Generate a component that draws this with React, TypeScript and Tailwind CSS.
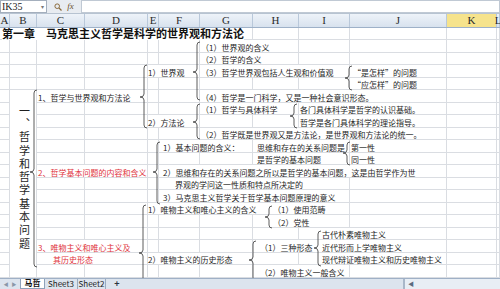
import React from 'react';

const letters = ['A', 'B', 'C', 'D', 'E', 'F', 'G', 'H', 'I', 'J', 'K', 'L'];

type Item = { pos: string; text: string; red?: boolean };

const items: Item[] = [
  { pos: 'col-start-7 row-start-2 pl-[1px]', text: '（1）世界观的含义' },
  { pos: 'col-start-7 row-start-3 pl-[1px]', text: '（2）哲学的含义' },
  { pos: 'col-start-5 row-start-4', text: '1）世界观' },
  { pos: 'col-start-7 row-start-4 pl-[1px]', text: '（3）哲学世界观包括人生观和价值观' },
  { pos: 'col-start-10 row-start-4 pl-[3px]', text: '“是怎样”的问题' },
  { pos: 'col-start-10 row-start-5 pl-[3px]', text: '“应怎样”的问题' },
  { pos: 'col-start-3 row-start-6 pl-[1px]', text: '1、哲学与世界观和方法论' },
  { pos: 'col-start-7 row-start-6 pl-[1px]', text: '（4）哲学是一门科学，又是一种社会意识形态。' },
  { pos: 'col-start-7 row-start-7 pl-[1px]', text: '（1）哲学与具体科学' },
  { pos: 'col-start-9 row-start-7 pl-[1px]', text: '各门具体科学是哲学的认识基础。' },
  { pos: 'col-start-5 row-start-8', text: '2）方法论' },
  { pos: 'col-start-9 row-start-8 pl-[1px]', text: '哲学是各门具体科学的理论指导。' },
  { pos: 'col-start-7 row-start-9 pl-[1px]', text: '（2）哲学既是世界观又是方法论，是世界观和方法论的统一。' },
  { pos: 'col-start-6 row-start-10 pl-[4px]', text: '1）基本问题的含义：' },
  { pos: 'col-start-8 row-start-10 pl-[4px]', text: '思维和存在的关系问题是' },
  { pos: 'col-start-10 row-start-10 pl-[1px]', text: '第一性' },
  { pos: 'col-start-8 row-start-11 pl-[4px]', text: '是哲学的基本问题' },
  { pos: 'col-start-10 row-start-11 pl-[1px]', text: '同一性' },
  { pos: 'col-start-3 row-start-12 pl-[1px]', text: '2、哲学基本问题的内容和含义', red: true },
  { pos: 'col-start-6 row-start-12 pl-[4px]', text: '2）思维和存在的关系问题之所以是哲学的基本问题，这是由哲学作为世' },
  { pos: 'col-start-6 row-start-13 pl-[16px]', text: '界观的学问这一性质和特点所决定的' },
  { pos: 'col-start-6 row-start-14 pl-[4px]', text: '3）马克思主义哲学关于哲学基本问题原理的意义' },
  { pos: 'col-start-5 row-start-15', text: '1）唯物主义和唯心主义的含义' },
  { pos: 'col-start-8 row-start-15 pl-[20px]', text: '（1）使用范畴' },
  { pos: 'col-start-8 row-start-16 pl-[20px]', text: '（2）党性' },
  { pos: 'col-start-9 row-start-17 pl-[23px]', text: '古代朴素唯物主义' },
  { pos: 'col-start-3 row-start-18 pl-[1px]', text: '3、唯物主义和唯心主义及', red: true },
  { pos: 'col-start-8 row-start-18 pl-[7px]', text: '（1）三种形态' },
  { pos: 'col-start-9 row-start-18 pl-[23px]', text: '近代形而上学唯物主义' },
  { pos: 'col-start-3 row-start-19 pl-[16px]', text: '其历史形态', red: true },
  { pos: 'col-start-5 row-start-19', text: '2）唯物主义的历史形态' },
  { pos: 'col-start-9 row-start-19 pl-[23px]', text: '现代辩证唯物主义和历史唯物主义' },
  { pos: 'col-start-8 row-start-20 pl-[7px]', text: '（2）唯物主义一般含义' },
];

// x, top, bottom, tip (page coordinates)
const braces: [number, number, number, number][] = [
  [34, 90, 267, 172],
  [144, 65, 128, 97],
  [197, 42, 100, 72],
  [349, 66, 90, 78],
  [197, 104, 139, 122],
  [294, 104, 128, 116],
  [157, 142, 204, 172],
  [347, 142, 165, 153],
  [143, 205, 300, 253],
  [269, 206, 228, 217],
  [253, 241, 281, 260],
  [318, 231, 266, 248],
];

const bracePath = (x: number, y1: number, y2: number, ym: number) => {
  const c = 3;
  const t = 4;
  return `M${x + c} ${y1} Q${x} ${y1} ${x} ${y1 + c} L${x} ${ym - c} Q${x} ${ym} ${x - t} ${ym} Q${x} ${ym} ${x} ${ym + c} L${x} ${y2 - c} Q${x} ${y2} ${x + c} ${y2}`;
};

const FormulaBar: React.FC = () => (
  <div className="flex h-[14px] items-stretch bg-[#e8ecf1] border-b border-[#b7c3d1]">
    <div className="flex w-[47px] items-center justify-between bg-white border border-[#a4afbd] pl-[1px] pr-[2px] font-['Liberation_Serif',serif] text-[10px] leading-none text-[#222]">
      <span>IK35</span>
      <span className="text-[6px] text-[#777]">▾</span>
    </div>
    <div className="flex w-[34px] items-center justify-center gap-[5px]">
      <svg width="8" height="8" viewBox="0 0 8 8">
        <circle cx="3.2" cy="3.2" r="2.3" fill="none" stroke="#8a6a3c" strokeWidth="1" />
        <path d="M5 5 L7.5 7.5" stroke="#8a6a3c" strokeWidth="1.2" />
      </svg>
      <span className="font-['Liberation_Serif',serif] text-[9px] italic leading-none text-[#6b4f2a]">fx</span>
    </div>
    <div className="flex-1 bg-white border border-[#c0c9d4]" />
  </div>
);

const Header: React.FC = () => (
  <div className="grid h-[14px] grid-cols-[10px_27px_48px_63px_11px_41px_53px_46px_51px_97px_50px_3px] border-b border-[#9eb1c8] bg-linear-to-b from-[#eef3f9] to-[#d8e2ee]">
    {letters.map((l) => (
      <div
        key={l}
        className={`flex items-center justify-center border-r border-[#b9c8da] font-['Liberation_Serif',serif] text-[11px] leading-none text-[#2b2b2b] ${
          l === 'K' ? 'bg-[#f6e38c]' : ''
        }`}
      >
        {l}
      </div>
    ))}
  </div>
);

const Sheet: React.FC = () => (
  <div className="relative h-[249.5px] bg-white">
    <div className="grid h-full grid-cols-[10px_27px_48px_63px_11px_41px_53px_46px_51px_97px_50px_3px] grid-rows-[12px_repeat(19,12.5px)]">
      {Array.from({ length: 20 * 12 }).map((_, i) => (
        <div key={i} className="border-r border-b border-[#dadde2]" />
      ))}
    </div>

    <div className="absolute inset-0 grid grid-cols-[10px_27px_48px_63px_11px_41px_53px_46px_51px_97px_50px_3px] grid-rows-[12px_repeat(19,12.5px)] font-['Noto_Sans_CJK_SC',sans-serif]">
      <div className="col-start-1 col-span-12 row-start-1 flex min-w-0 items-start pl-[2px]">
        <span className="w-max whitespace-nowrap bg-white text-[11px] font-bold leading-[11.5px] text-[#111]">
          第一章　马克思主义哲学是科学的世界观和方法论
        </span>
      </div>

      {items.map((it) => (
        <div key={it.text} className={`${it.pos} flex min-w-0 items-start`}>
          <span
            className={`flex h-[11.5px] w-max items-end whitespace-nowrap bg-white text-[8px] leading-[8px] ${
              it.red ? 'text-[#e0333c]' : 'text-[#1e1e1e]'
            }`}
          >
            {it.text}
          </span>
        </div>
      ))}

      <div className="col-start-2 row-start-6 row-span-15 mr-px mb-px flex justify-center bg-white pt-[15px] pl-[2px]">
        <span className="text-[11px] leading-[11px] tracking-[2.3px] text-[#1e1e1e] [writing-mode:vertical-rl]">
          一、哲学和哲学基本问题
        </span>
      </div>
    </div>

    <svg className="pointer-events-none absolute inset-0 h-full w-full overflow-hidden" viewBox="0 28 500 249.5" preserveAspectRatio="none">
      {braces.map(([x, y1, y2, ym], i) => (
        <path key={i} d={bracePath(x, y1, y2, ym)} fill="none" stroke="#4a4a4a" strokeWidth="0.9" />
      ))}
    </svg>
  </div>
);

const TabBar: React.FC = () => (
  <div className="relative flex h-[11.5px] items-stretch border-t border-[#9fb0c6] bg-[#dce4ee] font-['Noto_Sans_CJK_SC',sans-serif] text-[8px] leading-none">
    <div className="flex w-[20px] items-center justify-center gap-[3px] text-[5px] text-[#8a97a8]">
      <span>◀</span>
      <span>▶</span>
    </div>
    <div className="flex w-[25px] items-center justify-center border-x border-b border-[#8ea1ba] bg-white font-bold text-[#111]">马哲</div>
    <div className="flex w-[33px] items-center justify-center border-r border-[#9aabc0] text-[#222]">Sheet3</div>
    <div className="flex w-[28px] items-center justify-center border-r border-[#9aabc0] text-[#222]">Sheet2</div>
    <div className="flex w-[22px] items-center justify-center text-[9px] font-bold leading-none text-[#2c3440]">+</div>
    <div className="flex-1" />
    <div className="flex w-[97px] items-center border-l-2 border-[#a9b7c9] bg-[#e8eef5]">
      <span className="ml-[3px] text-[6px] text-[#5b6b80]">◀</span>
    </div>
  </div>
);

const App: React.FC = () => {
  return (
    <div className="flex h-[289px] w-[500px] flex-col overflow-hidden bg-white">
      <FormulaBar />
      <Header />
      <Sheet />
      <TabBar />
    </div>
  );
};

export default App;
